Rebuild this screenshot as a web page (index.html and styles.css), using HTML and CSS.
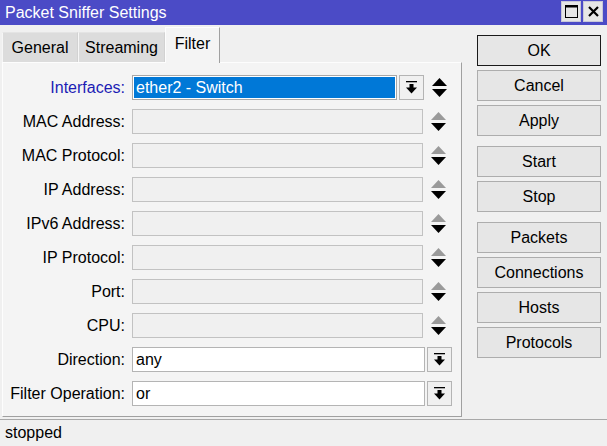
FILE: index.html
```html
<!DOCTYPE html>
<html>
<head>
<meta charset="utf-8">
<link rel="stylesheet" href="styles.css">
</head>
<body>
<div class="window">
  <div class="titlebar">
    <span class="title">Packet Sniffer Settings</span>
    <div class="wbtns">
      <span class="wbtn"><svg width="13" height="13" viewBox="0 0 13 13"><rect x="0.5" y="0.5" width="12" height="12" fill="none" stroke="#000"/><rect x="0" y="0" width="13" height="2.5" fill="#000"/></svg></span>
      <span class="wbtn"><svg width="11" height="11" viewBox="0 0 11 11"><path d="M1 1L10 10M10 1L1 10" stroke="#000" stroke-width="2.2" fill="none"/></svg></span>
    </div>
  </div>
  <div class="main">
    <div class="tabctl">
      <div class="tabs">
        <div class="tab t-general">General</div>
        <div class="tab t-streaming">Streaming</div>
        <div class="tab t-filter active">Filter</div>
      </div>
      <div class="panel">
        <div class="row">
          <span class="label focus">Interfaces:</span>
          <span class="field sel w-short"><span class="hl">ether2 - Switch</span></span>
          <span class="dd"><svg width="11" height="13" viewBox="0 0 11 13"><rect x="0" y="0" width="11" height="1.3"/><rect x="3.5" y="3" width="4" height="4"/><path d="M0 6.5h11L5.5 12.5z"/></svg></span>
          <span class="spin"><svg width="15" height="19" viewBox="0 0 15 19"><path d="M7.5 0L15 8H0z"/><path d="M0 11h15L7.5 19z"/></svg></span>
        </div>
        <div class="row">
          <span class="label">MAC Address:</span>
          <span class="field dis w-long"></span>
          <span class="spin"><svg width="15" height="19" viewBox="0 0 15 19"><path d="M7.5 0L15 8H0z" fill="#9a9a9a"/><path d="M0 11h15L7.5 19z"/></svg></span>
        </div>
        <div class="row">
          <span class="label">MAC Protocol:</span>
          <span class="field dis w-long"></span>
          <span class="spin"><svg width="15" height="19" viewBox="0 0 15 19"><path d="M7.5 0L15 8H0z" fill="#9a9a9a"/><path d="M0 11h15L7.5 19z"/></svg></span>
        </div>
        <div class="row">
          <span class="label">IP Address:</span>
          <span class="field dis w-long"></span>
          <span class="spin"><svg width="15" height="19" viewBox="0 0 15 19"><path d="M7.5 0L15 8H0z" fill="#9a9a9a"/><path d="M0 11h15L7.5 19z"/></svg></span>
        </div>
        <div class="row">
          <span class="label">IPv6 Address:</span>
          <span class="field dis w-long"></span>
          <span class="spin"><svg width="15" height="19" viewBox="0 0 15 19"><path d="M7.5 0L15 8H0z" fill="#9a9a9a"/><path d="M0 11h15L7.5 19z"/></svg></span>
        </div>
        <div class="row">
          <span class="label">IP Protocol:</span>
          <span class="field dis w-long"></span>
          <span class="spin"><svg width="15" height="19" viewBox="0 0 15 19"><path d="M7.5 0L15 8H0z" fill="#9a9a9a"/><path d="M0 11h15L7.5 19z"/></svg></span>
        </div>
        <div class="row">
          <span class="label">Port:</span>
          <span class="field dis w-long"></span>
          <span class="spin"><svg width="15" height="19" viewBox="0 0 15 19"><path d="M7.5 0L15 8H0z" fill="#9a9a9a"/><path d="M0 11h15L7.5 19z"/></svg></span>
        </div>
        <div class="row">
          <span class="label">CPU:</span>
          <span class="field dis w-long"></span>
          <span class="spin"><svg width="15" height="19" viewBox="0 0 15 19"><path d="M7.5 0L15 8H0z" fill="#9a9a9a"/><path d="M0 11h15L7.5 19z"/></svg></span>
        </div>
        <div class="row">
          <span class="label">Direction:</span>
          <span class="field en w-mid">any</span>
          <span class="dd"><svg width="11" height="13" viewBox="0 0 11 13"><rect x="0" y="0" width="11" height="1.3"/><rect x="3.5" y="3" width="4" height="4"/><path d="M0 6.5h11L5.5 12.5z"/></svg></span>
        </div>
        <div class="row">
          <span class="label">Filter Operation:</span>
          <span class="field en w-mid">or</span>
          <span class="dd"><svg width="11" height="13" viewBox="0 0 11 13"><rect x="0" y="0" width="11" height="1.3"/><rect x="3.5" y="3" width="4" height="4"/><path d="M0 6.5h11L5.5 12.5z"/></svg></span>
        </div>
      </div>
    </div>
    <div class="buttons">
      <div class="btn default">OK</div>
      <div class="btn">Cancel</div>
      <div class="btn">Apply</div>
      <div class="btn group">Start</div>
      <div class="btn">Stop</div>
      <div class="btn group">Packets</div>
      <div class="btn">Connections</div>
      <div class="btn">Hosts</div>
      <div class="btn">Protocols</div>
    </div>
  </div>
  <div class="status">stopped</div>
</div>
</body>
</html>
```

FILE: styles.css
```css
* { box-sizing: border-box; }
html, body { margin: 0; padding: 0; }
body {
  width: 607px;
  height: 446px;
  overflow: hidden;
  background: #f0f0f0;
  font-family: "Liberation Sans", Arial, sans-serif;
  font-size: 16px;
  color: #000;
}
.window { width: 607px; height: 446px; display: flex; flex-direction: column; }

.titlebar {
  height: 25px;
  background: #4b4bc6;
  color: #fff;
  display: flex;
  align-items: center;
  justify-content: space-between;
  padding-left: 5px;
  padding-right: 4px;
}
.title { line-height: 25px; margin-top: -1px; }
.wbtns { display: flex; gap: 2px; align-self: flex-start; margin-top: 1px; }
.wbtn {
  width: 20px;
  height: 21px;
  background: #e6e6e6;
  border: 1px solid #c8c8d8;
  display: flex;
  align-items: center;
  justify-content: center;
}

.main { display: flex; height: 394px; }
.tabctl { margin-left: 2px; width: 460px; display: flex; flex-direction: column; }
.tabs { height: 37px; display: flex; align-items: flex-end; }
.tab {
  height: 30px;
  display: flex;
  align-items: center;
  justify-content: center;
  background: #dcdcdc;
  border-top: 1px solid #e4e4e4;
  border-left: 1px solid #f6f6f6;
  border-right: 1px solid #d2d2d2;
}
.t-general { width: 76px; }
.t-streaming { width: 87px; }
.t-filter { width: 55px; }
.tab.active {
  height: 36px;
  margin-bottom: -1px;
  position: relative;
  z-index: 1;
  background: #f4f4f4;
  border-top: 1px solid #fdfdfd;
  border-left: 1px solid #fdfdfd;
  border-right: 1px solid #a0a0a0;
  padding-bottom: 3px;
}

.panel {
  height: 355px;
  background: #f4f4f4;
  border-top: 1px solid #fdfdfd;
  border-left: 1px solid #fdfdfd;
  border-right: 1px solid #a0a0a0;
  border-bottom: 1px solid #a0a0a0;
  padding-top: 12px;
  display: flex;
  flex-direction: column;
  gap: 9px;
}
.row { display: flex; align-items: center; height: 25px; }
.label { width: 122px; text-align: right; white-space: nowrap; }
.label.focus { color: #1c1cb4; }
.field {
  height: 25px;
  margin-left: 7px;
  display: flex;
  align-items: center;
  padding-left: 3px;
  white-space: nowrap;
}
.w-short { width: 265px; }
.w-long { width: 291px; }
.w-mid { width: 293px; }
.field.dis { background: #f0f0f0; border: 1px solid #c2c2c2; }
.field.en { background: #fff; border: 1px solid #b4b4b4; }
.field.sel { background: #fff; border: 1px solid #a8a8a8; padding: 1px; }
.hl {
  display: flex;
  align-items: center;
  width: 100%;
  height: 100%;
  background: #0078d7;
  color: #fff;
  padding-left: 2px;
}
.dd {
  width: 25px;
  height: 25px;
  margin-left: 2px;
  background: #f0f0f0;
  border: 1px solid #b4b4b4;
  display: flex;
  align-items: center;
  justify-content: center;
}
.dd svg { fill: #000; }
.spin { margin-left: 8px; width: 15px; height: 19px; display: flex; }
.spin svg { fill: #000; }

.buttons {
  margin-left: 15px;
  padding-top: 10px;
  display: flex;
  flex-direction: column;
  gap: 4px;
}
.btn {
  width: 124px;
  height: 31px;
  background: #e6e6e6;
  border: 1px solid #adadad;
  display: flex;
  align-items: center;
  justify-content: center;
}
.btn.default { border-color: #1a1a1a; }
.btn.group { margin-top: 6px; }

.status {
  border-top: 1px solid #a8a8a8;
  height: 27px;
  line-height: 26px;
  padding-left: 5px;
  background: #f0f0f0;
}
```
